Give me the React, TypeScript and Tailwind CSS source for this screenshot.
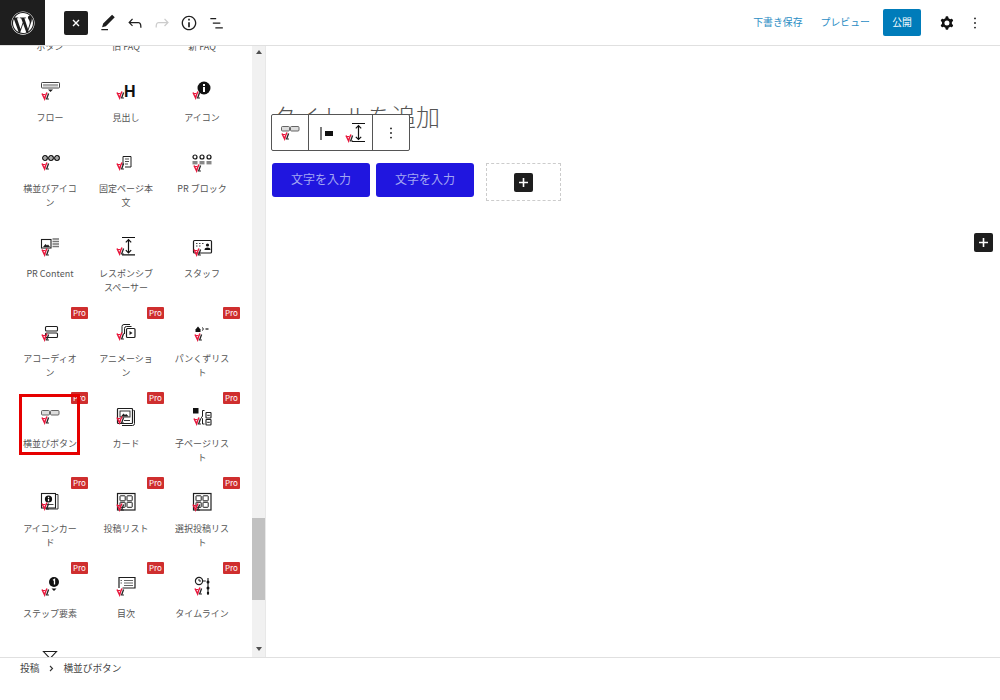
import React from "react";
import { FaWordpress } from "react-icons/fa";

const DARK = "#1e1e1e";

// Small red-and-black plugin mark that sits in the corner of each block icon
function Mark({ x = 4, y = 12 }: { x?: number; y?: number }) {
  return (
    <g transform={`translate(${x} ${y})`}>
      <path d="M0 1.5 L2.6 7 L3.6 3.5 L5 0.5" fill="none" stroke="#e8173c" strokeWidth="1.5" />
      <path d="M1 2.5 L3 2.5" stroke="#e8173c" strokeWidth="1" />
      <path d="M4.6 7 L6.6 1.5" stroke="#222" strokeWidth="1.3" />
      <path d="M3.8 7 L7 7" stroke="#222" strokeWidth="0.9" />
    </g>
  );
}

type IconProps = { children: React.ReactNode };

function Ico({ children }: IconProps) {
  return (
    <svg width="24" height="24" viewBox="0 0 24 24" className="block shrink-0">
      {children}
    </svg>
  );
}

const s = { fill: "none", stroke: DARK, strokeWidth: 1 } as const;

const icons: Record<string, React.ReactNode> = {
  flow: (
    <>
      <rect x="3.5" y="2.5" width="18" height="5.5" rx="0.8" fill="#fff" stroke="#444" strokeWidth="1" />
      <rect x="5" y="4" width="15" height="2.5" fill="#aaa" />
      <path d="M10 9.5h5l-2.5 2.5z" fill={DARK} />
      <Mark x={4} y={12} />
    </>
  ),
  heading: (
    <>
      <text x="10" y="17" fontSize="16" fontWeight="700" fontFamily="Liberation Sans, sans-serif" fill="#111">H</text>
      <Mark x={3} y={11} />
    </>
  ),
  icon: (
    <>
      <circle cx="14" cy="8" r="6.5" fill="#111" />
      <rect x="13" y="7" width="2" height="5" fill="#fff" />
      <rect x="13" y="4" width="2" height="2" fill="#fff" />
      <Mark x={3} y={11} />
    </>
  ),
  rowIcons: (
    <>
      {[7, 13, 19].map((cx) => (
        <g key={cx}>
          <circle cx={cx} cy="7" r="2.3" fill="none" stroke="#111" strokeWidth="1.3" />
          <circle cx={cx} cy="7" r="0.7" fill="#111" />
        </g>
      ))}
      <Mark x={4} y={11} />
    </>
  ),
  page: (
    <>
      <path d="M9 14V5.5h8v10.5h-6" {...s} />
      <path d="M11 8h4M11 10.5h4M11 13h3" {...s} strokeWidth="0.8" />
      <Mark x={3} y={11} />
    </>
  ),
  prBlock: (
    <>
      {[5, 12, 19].map((cx) => (
        <g key={cx}>
          <circle cx={cx} cy="6" r="2" fill="none" stroke="#111" strokeWidth="1.2" />
          <rect x={cx - 2.5} y="10" width="5" height="3.4" fill="#888" />
        </g>
      ))}
      <Mark x={4} y={13} />
    </>
  ),
  prContent: (
    <>
      <rect x="3.5" y="3.5" width="9.5" height="8.5" {...s} strokeWidth="1.1" />
      <path d="M5 11l2.5-3 1.5 1.5 1-1 2 2.5z" fill={DARK} />
      <path d="M14.5 3h6.5M14.5 5.5h6.5M14.5 8h6.5M14.5 10.5h6.5" stroke="#777" strokeWidth="1.3" />
      <Mark x={4} y={12} />
    </>
  ),
  spacer: (
    <>
      <path d="M8 1.5h13M8 18.8h13" stroke="#111" strokeWidth="1.2" />
      <path d="M14.5 3.5v13.5M11.8 6.3l2.7-2.7 2.7 2.7M11.8 14.2l2.7 2.7 2.7-2.7" fill="none" stroke="#111" strokeWidth="1.2" />
      <Mark x={3} y={11} />
    </>
  ),
  staff: (
    <>
      <rect x="3.5" y="4.5" width="18" height="12.5" rx="1" {...s} strokeWidth="1.2" />
      <path d="M6 7.5h1.5M9 7.5h1.5M12 7.5h1.5M6 10h1.5M9 10h1.5" stroke="#444" strokeWidth="1.2" />
      <circle cx="17.5" cy="9" r="1.6" fill="#111" />
      <path d="M14.5 14c0-3.2 6-3.2 6 0z" fill="#111" />
      <Mark x={4} y={12} />
    </>
  ),
  accordion: (
    <>
      <rect x="7.5" y="5.5" width="12" height="4.5" rx="1" {...s} strokeWidth="1.1" />
      <rect x="7.5" y="12" width="12" height="4.5" rx="1" {...s} strokeWidth="1.1" />
      <Mark x={4} y={12} />
    </>
  ),
  animation: (
    <>
      <path d="M8 12V5.5q0-2 2-2h6" {...s} strokeWidth="1" />
      <path d="M10.5 13V7.5q0-2 2-2h5" {...s} strokeWidth="1" />
      <rect x="12.5" y="7.5" width="8.5" height="9" rx="1" {...s} strokeWidth="1.2" />
      <path d="M15.5 10l3 2-3 2z" fill={DARK} />
      <Mark x={3} y={11} />
    </>
  ),
  crumbs: (
    <>
      <path d="M5.5 8.5L8 5.5l2.5 3v2.5h-5z" fill="#111" />
      <path d="M12 6.5l1.6 1.5-1.6 1.5" fill="none" stroke="#111" strokeWidth="1" />
      <path d="M15.5 8h3" stroke="#111" strokeWidth="1.2" />
      <Mark x={5} y={12} />
    </>
  ),
  rowButtons: (
    <>
      <rect x="3.5" y="4.5" width="8" height="4.5" rx="1" fill="#ddd" stroke="#555" strokeWidth="0.9" />
      <rect x="12.5" y="4.5" width="8.5" height="4.5" rx="1" fill="#ddd" stroke="#555" strokeWidth="0.9" />
      <Mark x={4} y={10} />
    </>
  ),
  card: (
    <>
      <path d="M19.5 4.5h1v13a2 2 0 0 1-2 2H8" {...s} strokeWidth="1" />
      <rect x="3.5" y="2.5" width="15" height="15" rx="0.8" {...s} strokeWidth="1.2" />
      <rect x="6" y="5" width="10" height="6" fill="#fff" stroke="#222" strokeWidth="0.9" />
      <path d="M7 10.5l2.5-3 1.5 1.5 1.2-1 2.6 2.5z" fill={DARK} />
      <path d="M10 14.5h6" stroke={DARK} strokeWidth="0.9" />
      <Mark x={3} y={10} />
    </>
  ),
  childPages: (
    <>
      <rect x="3" y="2" width="5.5" height="5.5" fill="#111" />
      <path d="M14.5 4.5h-2v6l-1.5 1 1.5 1v5.5h2" {...s} />
      <rect x="16" y="6.5" width="5" height="5.5" rx="0.6" {...s} strokeWidth="1.1" />
      <rect x="16" y="13.5" width="5" height="5.5" rx="0.6" {...s} strokeWidth="1.1" />
      <path d="M17.2 9.3h2.6M17.2 16.3h2.6" stroke={DARK} strokeWidth="1" />
      <Mark x={4} y={11} />
    </>
  ),
  iconCard: (
    <>
      <path d="M17.5 3.5h2.5v14.5H8" {...s} strokeWidth="0.9" />
      <rect x="3.5" y="2.5" width="14" height="14.5" {...s} strokeWidth="1.1" />
      <circle cx="10.5" cy="8" r="3.6" fill="#111" />
      <rect x="9.9" y="7.7" width="1.3" height="2.5" fill="#fff" />
      <rect x="9.9" y="5.8" width="1.3" height="1.2" fill="#fff" />
      <path d="M8 13.5h7.5" stroke="#333" strokeWidth="0.9" />
      <Mark x={4} y={11} />
    </>
  ),
  posts: (
    <>
      <rect x="3.5" y="2.5" width="17.5" height="16.5" {...s} strokeWidth="1.2" />
      {[
        [6, 4.8],
        [13, 4.8],
        [6, 11.3],
        [13, 11.3],
      ].map(([x, y]) => (
        <rect key={`${x}-${y}`} x={x} y={y} width="5.2" height="5" rx="0.5" {...s} strokeWidth="1" />
      ))}
      <Mark x={3} y={12} />
    </>
  ),
  step: (
    <>
      <circle cx="16" cy="6" r="5" fill="#111" />
      <path d="M15 4.2l1.5-0.9V8.5" fill="none" stroke="#fff" strokeWidth="1.3" />
      <path d="M13.5 12.5h5l-2.5 2.5z" fill="#111" />
      <Mark x={4} y={12} />
    </>
  ),
  toc: (
    <>
      <path d="M5 12V1.5h16V12H8.5" {...s} strokeWidth="1.2" />
      <path d="M10 4.5h9M10 7h9M10 9.5h9" stroke="#666" strokeWidth="1.2" />
      <path d="M6.5 4.5h1.5M6.5 7h1.5" stroke="#666" strokeWidth="1.2" />
      <Mark x={3} y={12} />
    </>
  ),
  timeline: (
    <>
      <circle cx="9" cy="5" r="3.6" {...s} strokeWidth="1.2" />
      <path d="M9 3v2h2M12.8 5h3" {...s} strokeWidth="1" />
      <path d="M18 2v17" stroke="#111" strokeWidth="1.1" />
      <circle cx="18" cy="6" r="1.5" fill="#111" />
      <circle cx="18" cy="12" r="1.5" fill="#111" />
      <circle cx="18" cy="17" r="1.2" fill="#111" />
      <Mark x={5} y={11} />
    </>
  ),
  funnel: <path d="M5.5 4.5h13l-6.5 7z" fill="#fff" stroke={DARK} strokeWidth="1.1" />,
  empty: null,
};

type Block = { label: string; icon: string; pro?: boolean; picked?: boolean };

const blocks: Block[] = [
  { label: "ボタン", icon: "empty" },
  { label: "旧 FAQ", icon: "empty" },
  { label: "新 FAQ", icon: "empty" },
  { label: "フロー", icon: "flow" },
  { label: "見出し", icon: "heading" },
  { label: "アイコン", icon: "icon" },
  { label: "横並びアイコン", icon: "rowIcons" },
  { label: "固定ページ本文", icon: "page" },
  { label: "PR ブロック", icon: "prBlock" },
  { label: "PR Content", icon: "prContent" },
  { label: "レスポンシブスペーサー", icon: "spacer" },
  { label: "スタッフ", icon: "staff" },
  { label: "アコーディオン", icon: "accordion", pro: true },
  { label: "アニメーション", icon: "animation", pro: true },
  { label: "パンくずリスト", icon: "crumbs", pro: true },
  { label: "横並びボタン", icon: "rowButtons", pro: true, picked: true },
  { label: "カード", icon: "card", pro: true },
  { label: "子ページリスト", icon: "childPages", pro: true },
  { label: "アイコンカード", icon: "iconCard", pro: true },
  { label: "投稿リスト", icon: "posts", pro: true },
  { label: "選択投稿リスト", icon: "posts", pro: true },
  { label: "ステップ要素", icon: "step", pro: true },
  { label: "目次", icon: "toc", pro: true },
  { label: "タイムライン", icon: "timeline", pro: true },
  { label: "", icon: "funnel" },
];

function BlockCell({ block }: { block: Block }) {
  return (
    <div className="relative flex flex-col items-center pt-[15px] pb-[11px]">
      {block.pro && (
        <span className="absolute right-0 top-[1px] flex h-[12px] w-[17px] items-center justify-center rounded-[1px] bg-[#cf2e2e] text-[8px] leading-none text-white">
          Pro
        </span>
      )}
      {block.picked && (
        <span className="absolute left-[7px] top-[3px] h-[61px] w-[61px] border-[3px] border-[#e60000]" />
      )}
      <Ico>{icons[block.icon]}</Ico>
      <div className="mt-[7px] min-h-[14px] w-[56px] text-center text-[9px] leading-[14px] text-[#555]">
        {block.label}
      </div>
    </div>
  );
}

function Glyph({ d, size = 24, color = DARK, rule }: { d: string; size?: number; color?: string; rule?: "evenodd" }) {
  return (
    <svg width={size} height={size} viewBox="0 0 24 24" fill={color}>
      <path d={d} fillRule={rule} clipRule={rule} />
    </svg>
  );
}

const PEN = "M20.1 5.1L16.9 2 6.2 12.7l-1.3 4.4 4.5-1.3L20.1 5.1zM4 20.8h8v-1.5H4v1.5z";
const UNDO = "M18.3 11.7c-.6-.6-1.4-.9-2.3-.9H6.7l2.9-3.3-1.1-1-4.5 5L8.5 16l1-1-2.7-2.7H16c.5 0 .9.2 1.3.5 1 1 1 3.4 1 4.5v.3h1.5v-.2c0-1.5 0-4.3-1.5-5.7z";
const REDO = "M15.6 6.5l-1.1 1 2.9 3.3H8c-.9 0-1.7.3-2.3.9-1.4 1.5-1.4 4.2-1.4 5.6v.2h1.5v-.3c0-1.1 0-3.5 1-4.5.3-.3.7-.5 1.3-.5h9.2L14.5 15l1.1 1.1 4.6-4.6-4.6-5z";
const INFO = "M12 3.2c-4.8 0-8.8 3.9-8.8 8.8 0 4.8 3.9 8.8 8.8 8.8 4.8 0 8.8-3.9 8.8-8.8 0-4.8-4-8.8-8.8-8.8zm0 16c-4 0-7.2-3.3-7.2-7.2C4.8 8 8 4.8 12 4.8s7.2 3.3 7.2 7.2c0 4-3.2 7.2-7.2 7.2zM11 17h2v-6h-2v6zm0-8h2V7h-2v2z";
const LIST = "M4 6h7v1.5H4zM7 11.5h9v1.5H7zM10 17h9v1.5h-9z";
const COG = "M10.289 4.836A1 1 0 0 1 11.275 4h1.306a1 1 0 0 1 .987.836l.244 1.466c.787.26 1.503.679 2.108 1.218l1.393-.522a1 1 0 0 1 1.216.437l.653 1.13a1 1 0 0 1-.23 1.273l-1.148.944a6.025 6.025 0 0 1 0 2.435l1.149.946a1 1 0 0 1 .23 1.272l-.653 1.13a1 1 0 0 1-1.216.437l-1.394-.522c-.605.54-1.32.958-2.108 1.218l-.244 1.466a1 1 0 0 1-.987.836h-1.306a1 1 0 0 1-.986-.836l-.244-1.466a5.995 5.995 0 0 1-2.108-1.218l-1.394.522a1 1 0 0 1-1.217-.436l-.653-1.131a1 1 0 0 1 .23-1.272l1.149-.946a6.026 6.026 0 0 1 0-2.435l-1.148-.944a1 1 0 0 1-.23-1.272l.653-1.131a1 1 0 0 1 1.217-.437l1.393.522a5.994 5.994 0 0 1 2.108-1.218l.244-1.466zM14.929 12a3 3 0 1 1-6 0 3 3 0 0 1 6 0z";
const DOTS = "M12 6.5a1.4 1.4 0 1 0 0-2.8 1.4 1.4 0 0 0 0 2.8zm0 6.9a1.4 1.4 0 1 0 0-2.8 1.4 1.4 0 0 0 0 2.8zm0 6.9a1.4 1.4 0 1 0 0-2.8 1.4 1.4 0 0 0 0 2.8z";

function PlusTile({ className = "" }: { className?: string }) {
  return (
    <span className={`flex h-[19px] w-[19px] items-center justify-center rounded-[2px] bg-[#1e1e1e] ${className}`}>
      <svg width="11" height="11" viewBox="0 0 11 11">
        <path d="M5.5 1v9M1 5.5h9" stroke="#fff" strokeWidth="1.6" />
      </svg>
    </span>
  );
}

function BlockToolbar() {
  return (
    <div className="absolute left-[5px] top-[68px] flex h-[37px] w-[139px] rounded-[2px] border border-[#555] bg-white">
      <div className="flex w-[37px] items-center justify-center border-r border-[#555]">
        <Ico>
          <rect x="3.5" y="5.5" width="8" height="4.5" rx="1" fill="#ddd" stroke="#555" strokeWidth="0.9" />
          <rect x="12.5" y="5.5" width="8.5" height="4.5" rx="1" fill="#ddd" stroke="#555" strokeWidth="0.9" />
          <Mark x={4} y={11} />
        </Ico>
      </div>
      <div className="flex w-[64px] items-center justify-between border-r border-[#555] pl-[11px] pr-[1px]">
        <svg width="18" height="24" viewBox="0 0 18 24">
          <path d="M1 6v13" stroke="#222" strokeWidth="1.2" />
          <rect x="5" y="10" width="8" height="5" fill="#111" />
        </svg>
        <span className="-ml-[4px] mr-[3px]">
          <Ico>
            <path d="M8 2.5h13M8 20.5h13" stroke="#111" strokeWidth="1.2" />
            <path d="M14.5 4.5v14M11.8 7.3l2.7-2.7 2.7 2.7M11.8 15.8l2.7 2.7 2.7-2.7" fill="none" stroke="#111" strokeWidth="1.2" />
            <Mark x={2} y={13} />
          </Ico>
        </span>
      </div>
      <div className="flex flex-1 items-center justify-center">
        <Glyph d={DOTS} size={16} />
      </div>
    </div>
  );
}

export default function App() {
  const jp = { fontFamily: '"Noto Sans CJK JP", sans-serif' };
  return (
    <div className="flex h-[700px] w-[1000px] flex-col overflow-hidden bg-white" style={jp}>
      {/* Top bar */}
      <header className="relative z-10 flex h-[46px] shrink-0 items-center border-b border-[#e0e0e0] bg-white">
        <div className="flex h-[45px] w-[45px] shrink-0 items-center justify-center bg-[#1e1e1e]">
          <FaWordpress size={24} color="#fff" />
        </div>
        <div className="ml-[19px] flex items-center">
          <span className="flex h-[24px] w-[24px] items-center justify-center rounded-[2px] bg-[#1e1e1e]">
            <svg width="10" height="10" viewBox="0 0 10 10">
              <path d="M2 2l6 6M8 2l-6 6" stroke="#fff" strokeWidth="1.4" />
            </svg>
          </span>
          <span className="ml-[10px] flex w-[20px] justify-center"><Glyph d={PEN} size={20} /></span>
          <span className="ml-[7px] flex w-[20px] justify-center"><Glyph d={UNDO} size={20} /></span>
          <span className="ml-[7px] flex w-[20px] justify-center"><Glyph d={REDO} size={20} color="#ccc" /></span>
          <span className="ml-[7px] flex w-[20px] justify-center"><Glyph d={INFO} size={20} /></span>
          <span className="ml-[8px] flex w-[20px] justify-center"><Glyph d={LIST} size={20} /></span>
        </div>
        <div className="ml-auto flex items-center">
          <span className="text-[9.9px] text-[#2b8dc4]">下書き保存</span>
          <span className="ml-[18px] text-[9.9px] text-[#2b8dc4]">プレビュー</span>
          <span className="ml-[13px] flex h-[27px] w-[38px] items-center justify-center rounded-[2px] bg-[#007cba] text-[9.8px] text-white">
            公開
          </span>
          <span className="ml-[16px] flex w-[20px] justify-center"><Glyph d={COG} size={20} color="#111" rule="evenodd" /></span>
          <span className="ml-[8px] mr-[15px] flex w-[20px] justify-center"><Glyph d={DOTS} size={16} /></span>
        </div>
      </header>

      <div className="flex min-h-0 flex-1">
        {/* Block inserter, scrolled part way down its list */}
        <aside className="flex w-[266px] shrink-0 border-r border-[#e8e8e8]">
          <div className="w-[252px] overflow-hidden px-3">
            <div className="-mt-[52px] grid grid-cols-3">
              {blocks.map((b, i) => (
                <BlockCell key={i} block={b} />
              ))}
            </div>
          </div>
          <div className="flex w-[13px] flex-col items-center bg-[#f1f1f1]">
            <span className="mt-[4px] h-0 w-0 border-x-[3px] border-b-[4px] border-x-transparent border-b-[#505050]" />
            <span className="mt-[464px] h-[82px] w-full bg-[#c1c1c1]" />
            <span className="mt-[47px] h-0 w-0 border-x-[3px] border-t-[4px] border-x-transparent border-t-[#505050]" />
          </div>
        </aside>

        {/* Post canvas */}
        <main className="relative min-w-0 flex-1 pl-[6px] pt-[54px]">
          <h1 className="h-[36px] text-[24px] font-light leading-[36px] text-[#555]" style={{ fontFamily: '"Liberation Serif", "Noto Sans CJK JP", serif' }}>
            タイトルを追加
          </h1>
          <BlockToolbar />
          <div className="mt-[27px] flex items-start gap-[6px]">
            {["文字を入力", "文字を入力"].map((t, i) => (
              <span
                key={i}
                className="flex h-[34px] w-[98px] items-center justify-center rounded-[3px] bg-[#2016df] text-[12px] text-[#a3a6f2]"
                style={{ fontFamily: '"Liberation Serif", "Noto Sans CJK JP", serif' }}
              >
                {t}
              </span>
            ))}
            <span className="ml-[6px] flex h-[38px] w-[75px] items-center justify-center border border-dashed border-[#ccc]">
              <PlusTile />
            </span>
          </div>
          <PlusTile className="absolute left-[708px] top-[187px]" />
        </main>
      </div>

      {/* Breadcrumb */}
      <footer className="flex h-[43px] shrink-0 items-start border-t border-[#e0e0e0] bg-white pl-[20px] pt-[2px] text-[9.7px] leading-[16px] text-[#444]">
        <span>投稿</span>
        <span className="ml-[10px] mr-[9px] flex h-[16px] items-center">
          <svg width="5" height="7" viewBox="0 0 5 7"><path d="M1 1l2.5 2.5L1 6" fill="none" stroke="#333" strokeWidth="1.1" /></svg>
        </span>
        <span>横並びボタン</span>
      </footer>
    </div>
  );
}
